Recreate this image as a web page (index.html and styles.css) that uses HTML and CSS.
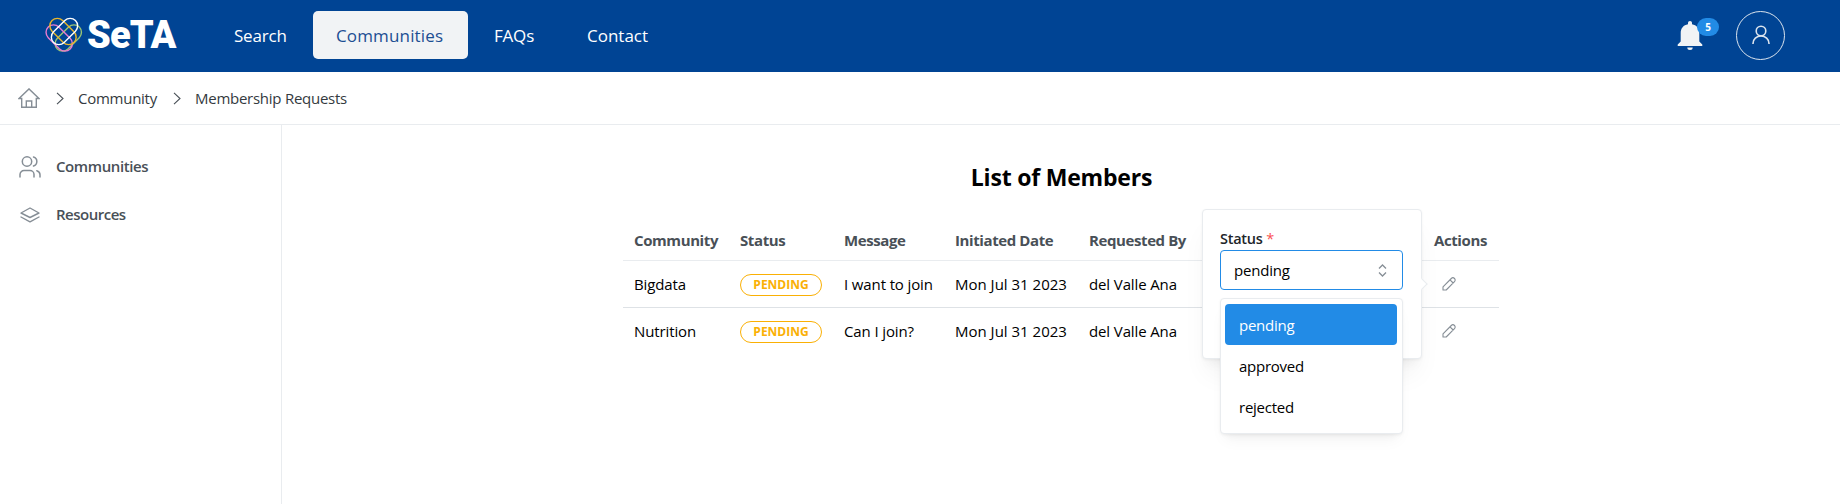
FILE: index.html
```html
<!DOCTYPE html>
<html lang="en">
<head>
<meta charset="utf-8">
<title>SeTA - Membership Requests</title>
<link rel="stylesheet" href="styles.css">
</head>
<body>
<header class="header">
  <a class="logo">
    <svg class="logo-mark" viewBox="0 0 38 36" fill="none" stroke-width="1.400">
      <rect x="-7.500" y="-15.500" width="15" height="31" rx="7.500" transform="translate(23.300 21) rotate(45)" stroke="#9ac573"/>
      <rect x="-7.500" y="-15.500" width="15" height="31" rx="7.500" transform="translate(14.200 21) rotate(-45)" stroke="#e87bd0"/>
      <rect x="-7.500" y="-15.500" width="15" height="31" rx="7.500" transform="translate(18 14.500) rotate(-45)" stroke="#e8b62c"/>
      <rect x="-7.500" y="-15.500" width="15" height="31" rx="7.500" transform="translate(19.500 14.500) rotate(45)" stroke="#fff"/>
    </svg>
    <span class="logo-text">SeTA</span>
  </a>
  <nav class="nav">
    <a class="nav-link search">Search</a>
    <a class="nav-link active">Communities</a>
    <a class="nav-link faqs">FAQs</a>
    <a class="nav-link contact">Contact</a>
  </nav>
  <div class="notify">
    <svg class="bell" viewBox="0 0 26 30" fill="#f1f3f5"><path d="M13 0c1.200 0 2 .9 2 2v1.300c4.500.8 7.300 4 7.300 8.700v8.500l3 3V25H.7v-1.500l3-3V12c0-4.700 2.800-7.900 7.300-8.700V2c0-1.100.8-2 2-2zM10.300 26.500h5.400a2.700 2.500 0 0 1-5.400 0z"/></svg>
    <span class="count">5</span>
  </div>
  <div class="avatar">
    <svg viewBox="0 0 18 20" fill="none" stroke="#dbe4ee" stroke-width="1.600"><circle cx="9" cy="6" r="4.800"/><path d="M1 19v-.5a8 7.500 0 0 1 16 0v.5"/></svg>
  </div>
</header>
<div class="crumbs">
  <svg class="home" viewBox="0 0 22 20" fill="none" stroke="#868e96" stroke-width="1.400"><path d="M3.700 10.500H1L11 .9l10 9.600h-2.700v8.700H3.700zM8.300 19v-6h5.400v6"/></svg>
  <svg class="chev" viewBox="0 0 8 13" fill="none" stroke="#495057" stroke-width="1.100"><path d="M1 .8l6 5.700-6 5.700"/></svg>
  <span class="crumb">Community</span>
  <svg class="chev" viewBox="0 0 8 13" fill="none" stroke="#495057" stroke-width="1.100"><path d="M1 .8l6 5.700-6 5.700"/></svg>
  <span class="crumb last">Membership Requests</span>
</div>
<div class="body">
  <aside class="side">
    <a class="side-link">
      <svg viewBox="0 0 22 22" fill="none" stroke="#868e96" stroke-width="1.500" stroke-linecap="round"><circle cx="8" cy="5.500" r="4.700"/><path d="M1 21v-2.500a4 4 0 0 1 4-4h6a4 4 0 0 1 4 4V21M14.500 1a4.700 4.700 0 0 1 0 9M21 21v-2.300a4.200 4.200 0 0 0-3.200-4"/></svg>
      <span>Communities</span>
    </a>
    <a class="side-link">
      <svg viewBox="0 0 22 22" fill="none" stroke="#868e96" stroke-width="1.400" stroke-linejoin="round" stroke-linecap="round"><path d="M11 4l9 5-9 4.500L2 9zM2 13l9 4.800 9-4.800"/></svg>
      <span class="res">Resources</span>
    </a>
  </aside>
  <main class="main">
    <h1 class="title">List of Members</h1>
    <div class="table">
      <div class="row head"><span>Community</span><span>Status</span><span>Message</span><span>Initiated Date</span><span>Requested By</span><span></span><span>Actions</span></div>
      <div class="row first">
        <span>Bigdata</span><span class="cell"><span class="badge">PENDING</span></span><span>I want to join</span><span class="date">Mon Jul 31 2023</span><span>del Valle Ana</span><span></span>
        <span class="cell"><svg class="pencil" viewBox="0 0 14 14" fill="none" stroke="#868e96" stroke-width="1.100" stroke-linejoin="round"><path d="M1 13v-3.200L9.300 1.500a2.200 2.200 0 0 1 3.200 3.200L4.200 13zM8 2.800L11.200 6"/></svg></span>
      </div>
      <div class="row">
        <span>Nutrition</span><span class="cell"><span class="badge">PENDING</span></span><span>Can I join?</span><span class="date">Mon Jul 31 2023</span><span>del Valle Ana</span><span></span>
        <span class="cell"><svg class="pencil" viewBox="0 0 14 14" fill="none" stroke="#868e96" stroke-width="1.100" stroke-linejoin="round"><path d="M1 13v-3.200L9.300 1.500a2.200 2.200 0 0 1 3.200 3.200L4.200 13zM8 2.800L11.200 6"/></svg></span>
      </div>
      <div class="popover">
        <div class="arrow"></div>
        <div class="label">Status <b>*</b></div>
        <div class="select"><span>pending</span>
          <svg viewBox="0 0 9 13" fill="none" stroke="#868e96" stroke-width="1.300"><path d="M1 4.500L4.500 1 8 4.500M1 8.500L4.500 12 8 8.500"/></svg>
        </div>
        <div class="menu">
          <div class="option on">pending</div>
          <div class="option">approved</div>
          <div class="option">rejected</div>
        </div>
      </div>
    </div>
  </main>
</div>
</body>
</html>
```
FILE: styles.css
```css
* { box-sizing: border-box; }
body { margin: 0; height: 504px; overflow: hidden; background: #fff; color: #000; font: 15px/22px "Open Sans", "Noto Sans", sans-serif; letter-spacing: -0.12px; display: flex; flex-direction: column; white-space: nowrap; }
svg { display: block; flex: none; }
.header { height: 72px; flex: none; background: #004494; display: flex; align-items: center; padding: 0 55px 2px 45px; }
.logo { display: flex; align-items: center; width: 169px; }
.logo-mark { width: 38px; height: 36px; margin-right: 4px; }
.logo-text { font: 900 38px/44px Roboto, sans-serif; color: #fff; letter-spacing: -0.9px; }
.nav { display: flex; flex: 1; }
.nav-link { height: 48px; line-height: 49px; font-size: 17px; color: #fff; padding-left: 20px; letter-spacing: -0.2px; }
.search { width: 99px; }
.active { width: 155px; padding-left: 23px; background: #f1f3f5; color: #1c4e93; border-radius: 5px; letter-spacing: 0.15px; }
.faqs { padding-left: 26px; width: 119px; }
.contact { padding-left: 0; letter-spacing: 0; }
.notify { display: flex; width: 59px; height: 34px; position: relative; }
.bell { width: 26px; height: 30px; margin-top: 3px; }
.count { position: absolute; left: 20px; top: 0; width: 22px; height: 18px; border-radius: 9px; background: #228be6; color: #fff; font-size: 10px; line-height: 19px; font-weight: 700; text-align: center; }
.avatar { width: 49px; height: 49px; border: 1px solid #dbe4ee; border-radius: 50%; display: flex; align-items: center; justify-content: center; }
.avatar svg { width: 18px; height: 20px; }
.crumbs { height: 53px; flex: none; border-bottom: 1px solid #e9ecef; display: flex; align-items: center; padding-left: 18px; color: #343a40; }
.home { width: 22px; height: 20px; margin-right: 16px; }
.chev { width: 8px; height: 13px; margin-right: 14px; }
.crumb { width: 95px; letter-spacing: -0.26px; }
.body { flex: 1; display: flex; }
.side { width: 282px; border-right: 1px solid #e9ecef; padding: 18px 0 0 19px; }
.side-link { display: flex; align-items: center; height: 48px; gap: 15px; color: #495057; font-weight: 600; font-size: 15px; letter-spacing: -0.4px; }
.side-link span { padding-bottom: 2px; }
.side-link .res { letter-spacing: -0.5px; }
.side-link svg { width: 22px; height: 22px; }
.main { flex: 1; padding: 35px 0 0 341px; }
.title { margin: 0; width: 877px; text-align: center; font-size: 23px; line-height: 34px; font-weight: 700; letter-spacing: -0.2px; }
.table { width: 876px; margin-top: 28px; position: relative; }
.row { display: grid; grid-template-columns: 106px 104px 111px 134px 158px 187px 1fr; padding-left: 11px; height: 46px; align-items: center; }
.head { height: 39px; padding-bottom: 2px; border-bottom: 1px solid #e9ecef; font-weight: 700; color: #495057; letter-spacing: -0.4px; }
.first { height: 47px; border-bottom: 1px solid #dee2e6; }
.cell { display: flex; align-items: center; }
.date { letter-spacing: 0; }
.badge { width: 82px; height: 22px; border: 1px solid #fab005; border-radius: 11px; color: #fab005; font-size: 12px; line-height: 20px; font-weight: 700; text-align: center; margin-top: 1px; letter-spacing: 0; }
.pencil { width: 14px; height: 14px; margin-left: 8px; }
.popover { position: absolute; left: 579px; top: -13px; width: 220px; height: 150px; background: #fff; border: 1px solid #e9ecef; border-radius: 4px; padding: 18px 17px; box-shadow: 0 1px 3px rgba(0,0,0,.05), 0 20px 25px -5px rgba(0,0,0,.05), 0 10px 10px -5px rgba(0,0,0,.04); }
.arrow { position: absolute; right: -5px; top: 70px; width: 8px; height: 8px; background: #fff; border: 1px solid #e9ecef; border-left: 0; border-bottom: 0; transform: rotate(45deg); }
.label { height: 22px; line-height: 22px; font-size: 14.5px; font-weight: 600; color: #212529; letter-spacing: -0.25px; }
.label b { color: #fa5252; font-weight: 400; }
.select { width: 183px; height: 40px; border: 1px solid #228be6; border-radius: 4px; display: flex; align-items: center; justify-content: space-between; padding: 0 15px 0 13px; letter-spacing: -0.2px; }
.select svg { width: 9px; height: 13px; }
.menu { position: absolute; left: 17px; top: 88px; width: 183px; height: 136px; padding: 5px 4px; background: #fff; border: 1px solid #e9ecef; border-radius: 4px; letter-spacing: -0.25px; box-shadow: 0 1px 3px rgba(0,0,0,.05), 0 10px 15px -5px rgba(0,0,0,.05), 0 7px 7px -5px rgba(0,0,0,.04); }
.option { height: 41px; line-height: 42px; padding-left: 14px; width: 172px; border-radius: 4px; }
.on { background: #228be6; color: #fff; }
```
